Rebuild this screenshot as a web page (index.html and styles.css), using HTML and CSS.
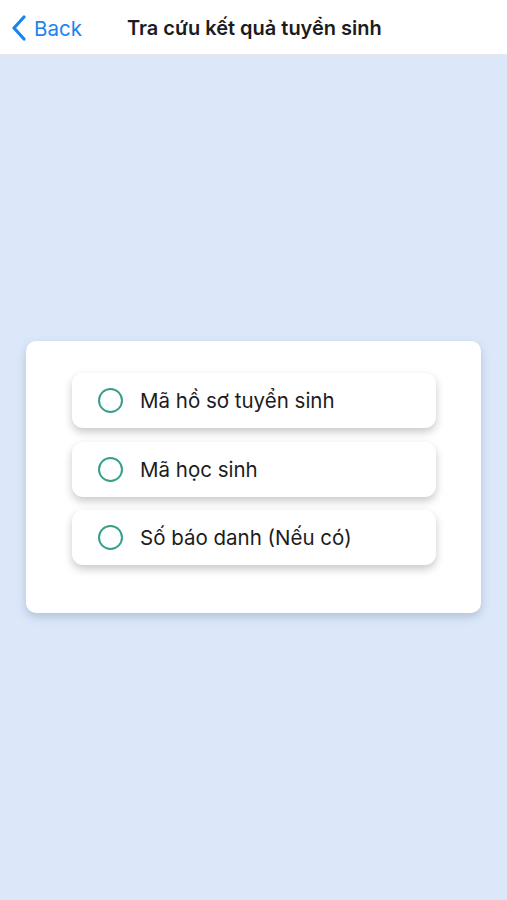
FILE: index.html
```html
<!DOCTYPE html>
<html>
<head>
<meta charset="utf-8">
<link rel="stylesheet" href="styles.css">
</head>
<body>
<div class="app">
  <header class="nav">
    <div class="back">
      <svg class="chev" width="16" height="26" viewBox="0 0 16 26"><path d="M13 2 L3 13 L13 24" fill="none" stroke="#1a84f2" stroke-width="3.2" stroke-linecap="round" stroke-linejoin="round"/></svg>
      <span>Back</span>
    </div>
    <div class="title">Tra cứu kết quả tuyển sinh</div>
  </header>
  <main class="content">
    <div class="card">
      <div class="option"><span class="radio"></span><span class="label">Mã hồ sơ tuyển sinh</span></div>
      <div class="option"><span class="radio"></span><span class="label">Mã học sinh</span></div>
      <div class="option"><span class="radio"></span><span class="label">Số báo danh (Nếu có)</span></div>
    </div>
  </main>
</div>
</body>
</html>
```
FILE: styles.css
```css
* { box-sizing: border-box; }
html, body { margin: 0; padding: 0; }
body {
  font-family: Inter, "Noto Sans", "Liberation Sans", sans-serif;
  background: #dce8fa;
  width: 507px;
  height: 900px;
  overflow: hidden;
}
.app { display: flex; flex-direction: column; height: 900px; }
.nav {
  height: 55px;
  background: #ffffff;
  border-bottom: 1px solid #e3e8ef;
  display: flex;
  align-items: center;
  padding-left: 11px;
  padding-top: 2px;
}
.back {
  display: flex;
  align-items: center;
  gap: 7px;
  color: #1a84f2;
  font-size: 20.5px;
  width: 116px;
}
.chev { display: block; }
.title {
  font-size: 20px;
  font-weight: 600;
  color: #1c1c1e;
}
.content {
  flex: 1;
  padding: 286px 26px 0 26px;
}
.card {
  background: #ffffff;
  border-radius: 10px;
  padding: 32px 45px 48px 46px;
  display: flex;
  flex-direction: column;
  gap: 13.5px;
  box-shadow: 0 4px 10px rgba(60, 80, 110, 0.25);
}
.option {
  height: 55px;
  background: #ffffff;
  border-radius: 11px;
  display: flex;
  align-items: center;
  padding-left: 26px;
  box-shadow: 0 4px 9px rgba(0, 0, 0, 0.22);
}
.radio {
  width: 25px;
  height: 25px;
  border-radius: 50%;
  border: 2px solid #3a9e8b;
  margin-right: 17px;
}
.label {
  font-size: 20.5px;
  color: #1c1c1e;
}
```
